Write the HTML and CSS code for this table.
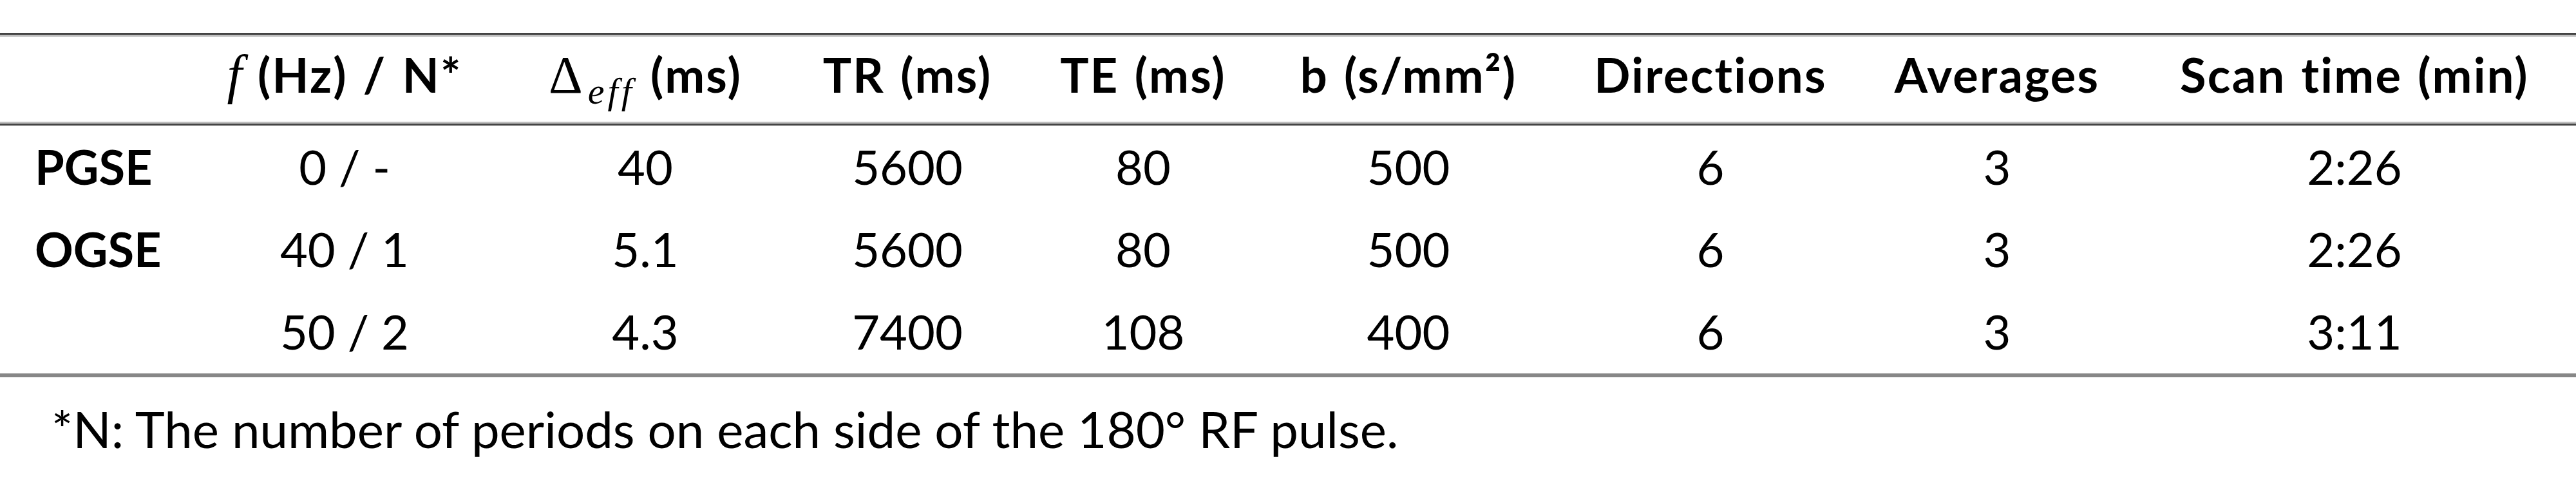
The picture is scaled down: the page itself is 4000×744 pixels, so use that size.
FILE: index.html
```html
<!DOCTYPE html>
<html lang="en">
  <head>
    <meta charset="UTF-8" />
    <title>Diffusion Scan Parameters</title>
    <link rel="stylesheet" href="styles.css">
  </head>
  <body>
    <div class="page">
      <table class="scan-table">
        <colgroup>
          <col class="col-label">
          <col class="col-freq">
          <col class="col-delta">
          <col class="col-tr">
          <col class="col-te">
          <col class="col-b">
          <col class="col-dir">
          <col class="col-avg">
          <col class="col-time">
        </colgroup>
        <thead>
          <tr>
            <th></th>
            <th><span class="math">f</span> (Hz) / N*</th>
            <th><span class="math-up">Δ</span><sub class="math-sub">eff</sub> (ms)</th>
            <th>TR (ms)</th>
            <th>TE (ms)</th>
            <th>b (s/mm²)</th>
            <th>Directions</th>
            <th>Averages</th>
            <th>Scan time (min)</th>
          </tr>
        </thead>
        <tbody>
          <tr>
            <td class="row-label">PGSE</td>
            <td>0 / -</td>
            <td>40</td>
            <td>5600</td>
            <td>80</td>
            <td>500</td>
            <td>6</td>
            <td>3</td>
            <td>2:26</td>
          </tr>
          <tr>
            <td class="row-label">OGSE</td>
            <td>40 / 1</td>
            <td>5.1</td>
            <td>5600</td>
            <td>80</td>
            <td>500</td>
            <td>6</td>
            <td>3</td>
            <td>2:26</td>
          </tr>
          <tr>
            <td class="row-label"></td>
            <td>50 / 2</td>
            <td>4.3</td>
            <td>7400</td>
            <td>108</td>
            <td>400</td>
            <td>6</td>
            <td>3</td>
            <td>3:11</td>
          </tr>
        </tbody>
      </table>

      <p class="footnote">*N: The number of periods on each side of the 180° RF pulse.</p>
    </div>
  </body>
</html>
```

FILE: styles.css
```css
* {
  box-sizing: border-box;
}

body {
  margin: 0;
  background: white;
  color: #000;
  font-family: Lato, "Liberation Sans", sans-serif;
}

.page {
  width: 4000px;
  padding-top: 51px;
}

.scan-table {
  width: 4000px;
  table-layout: fixed;
  border-collapse: separate;
  border-spacing: 0;
  font-size: 74px;
  line-height: 88px;
}

.col-label { width: 286px; }
.col-freq  { width: 498px; }
.col-delta { width: 436px; }
.col-tr    { width: 378px; }
.col-te    { width: 354px; }
.col-b     { width: 470px; }
.col-dir   { width: 468px; }
.col-avg   { width: 422px; }
.col-time  { width: 688px; }

th, td {
  padding: 20px 0;
  text-align: center;
  white-space: nowrap;
}

/* header row: dark rule over a light one, then light over dark */
th {
  font-weight: 700;
  letter-spacing: 2.2px;
  word-spacing: 4px;
  padding-top: 18px;
  padding-bottom: 29px;
  border-top: 3px solid #444;
  border-bottom: 3px solid #bfbfbf;
  box-shadow: inset 0 3px 0 #bfbfbf;
}

tbody tr:first-child td {
  border-top: 3px solid #444;
}

tbody tr:last-child td {
  padding-bottom: 21px;
  border-bottom: 6px solid #878787;
}

td {
  font-weight: 400;
}

.row-label {
  text-align: left;
  padding-left: 54px;
  font-weight: 700;
}

.math {
  font-family: "Liberation Serif", serif;
  font-style: italic;
  font-weight: 400;
  font-size: 84px;
  line-height: 0;
  letter-spacing: 0;
}

.math-up {
  font-family: "Liberation Serif", serif;
  font-weight: 400;
  font-size: 82px;
  line-height: 0;
  letter-spacing: 0;
}

.math-sub {
  font-family: "Liberation Serif", serif;
  font-style: italic;
  font-weight: 400;
  font-size: 58px;
  line-height: 0;
  letter-spacing: 5px;
  vertical-align: -17px;
  margin-left: 8px;
}

.footnote {
  margin: 0;
  padding: 33px 0 0 80px;
  font-size: 78px;
  line-height: 94px;
  white-space: nowrap;
}
```
